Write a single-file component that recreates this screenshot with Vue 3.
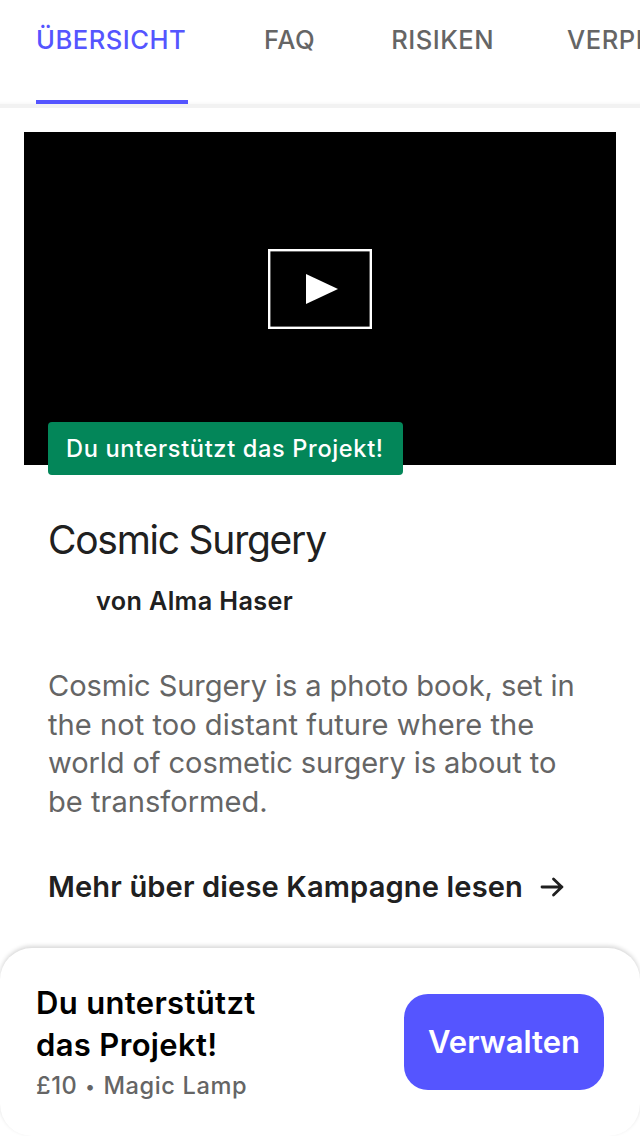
<script setup>
const tabs = ['ÜBERSICHT', 'FAQ', 'RISIKEN', 'VERPFLICHTUNGEN']
const blurb = ['Cosmic Surgery is a photo book, set in', 'the not too distant future where the', 'world of cosmetic surgery is about to', 'be transformed.']
</script>

<template>
  <div class="page">
    <nav class="tabs">
      <a v-for="(tab, i) in tabs" :key="tab" class="tab" :class="{ active: i === 0 }">{{ tab }}</a>
    </nav>
    <main class="content">
      <div class="video">
        <button class="play" aria-label="Play">
          <svg width="104" height="80" viewBox="0 0 104 80"><rect x="1.2" y="1.2" width="101.6" height="77.6" fill="none" stroke="#fff" stroke-width="2.4" /><path d="M38 25v30l32-15z" fill="#fff" /></svg>
        </button>
        <div class="badge">Du unterstützt das Projekt!</div>
      </div>
      <div class="details">
        <h1>Cosmic Surgery</h1>
        <div class="author">von Alma Haser</div>
        <p class="blurb"><span v-for="(line, i) in blurb" :key="i" :class="'line' + i">{{ line }}</span></p>
        <a class="more"><span>Mehr über diese Kampagne lesen</span>
          <svg width="24" height="22" viewBox="0 0 24 22" fill="none" stroke="#202020" stroke-width="2.8" stroke-linecap="round" stroke-linejoin="round"><path d="M2 11h20M13.5 3l8.3 8-8.3 8" /></svg>
        </a>
      </div>
    </main>
    <footer class="pledge">
      <div class="summary">
        <strong><span>Du unterstützt</span><span>das Projekt!</span></strong>
        <small>£10 <i>•</i> Magic Lamp</small>
      </div>
      <button class="manage">Verwalten</button>
    </footer>
  </div>
</template>

<style>
body { background: #fff; }
</style>
<style scoped>
.page { width: 640px; height: 1136px; overflow: hidden; display: flex; flex-direction: column; font-family: Inter, "Liberation Sans", sans-serif; background: #fff; color: #202020; }
.page * { box-sizing: border-box; }
.tabs { height: 108px; flex: none; display: flex; gap: 76px; padding-left: 36px; overflow: hidden; background: linear-gradient(#fff 101px, #f9f9f9 104px, #f2f2f2 104px); white-space: nowrap; }
.tab { height: 104px; padding: 24px 0 0; font-size: 25.6px; line-height: 32px; font-weight: 550; letter-spacing: .5px; color: #656565; flex: none; }
.tab:last-child { margin-left: -3px; }
.active { width: 152px; color: #5555ff; border-bottom: 4px solid #5555ff; }
.content { flex: 1; padding: 24px 24px 0; }
.video { height: 333px; background: #000; position: relative; display: flex; justify-content: center; padding-top: 117px; }
.play { width: 104px; height: 80px; padding: 0; border: 0; background: none; }
.play svg { display: block; }
.badge { position: absolute; left: 24px; top: 290px; width: 355px; height: 53px; border-radius: 4px; background: #038659; color: #fff; padding-left: 18px; font-size: 23.6px; line-height: 54px; font-weight: 550; letter-spacing: .64px; white-space: nowrap; }
.details { padding: 49px 24px 0; white-space: nowrap; }
h1 { margin: 0; font-size: 39px; line-height: 52px; font-weight: 400; letter-spacing: -1.25px; }
.author { margin: 19px 0 0 48px; font-size: 25.2px; line-height: 32px; font-weight: 600; letter-spacing: .38px; }
.blurb { margin: 50px 0 0; font-size: 29.1px; line-height: 38.7px; color: #656565; }
.blurb span { display: block; width: max-content; }
.line0 { letter-spacing: -.1px; }
.line1 { letter-spacing: .03px; }
.line2 { letter-spacing: -.11px; }
.line3 { letter-spacing: 0; }
.more { display: flex; align-items: center; gap: 17px; margin-top: 46px; font-size: 29.1px; line-height: 38px; font-weight: 600; letter-spacing: .13px; }
.pledge { height: 188px; flex: none; display: flex; justify-content: space-between; padding: 34px 36px 0; border-radius: 32px; box-shadow: 0 -2px 4px rgba(0, 0, 0, .16); background: #fff; }
.summary { white-space: nowrap; }
strong { display: block; font-size: 31px; line-height: 42px; font-weight: 600; letter-spacing: .34px; color: #000; }
strong span { display: block; width: max-content; }
small { display: block; font-size: 23.6px; line-height: 39px; font-weight: 550; letter-spacing: .6px; color: #656565; }
small i { font-style: normal; font-size: 18px; margin: 0 1px; position: relative; top: -1px; }
.manage { width: 200px; height: 96px; margin-top: 12px; border: 0; border-radius: 24px; background: #5555ff; color: #fff; font: 600 31px/40px Inter, "Liberation Sans", sans-serif; letter-spacing: 0; padding: 0; }
</style>
